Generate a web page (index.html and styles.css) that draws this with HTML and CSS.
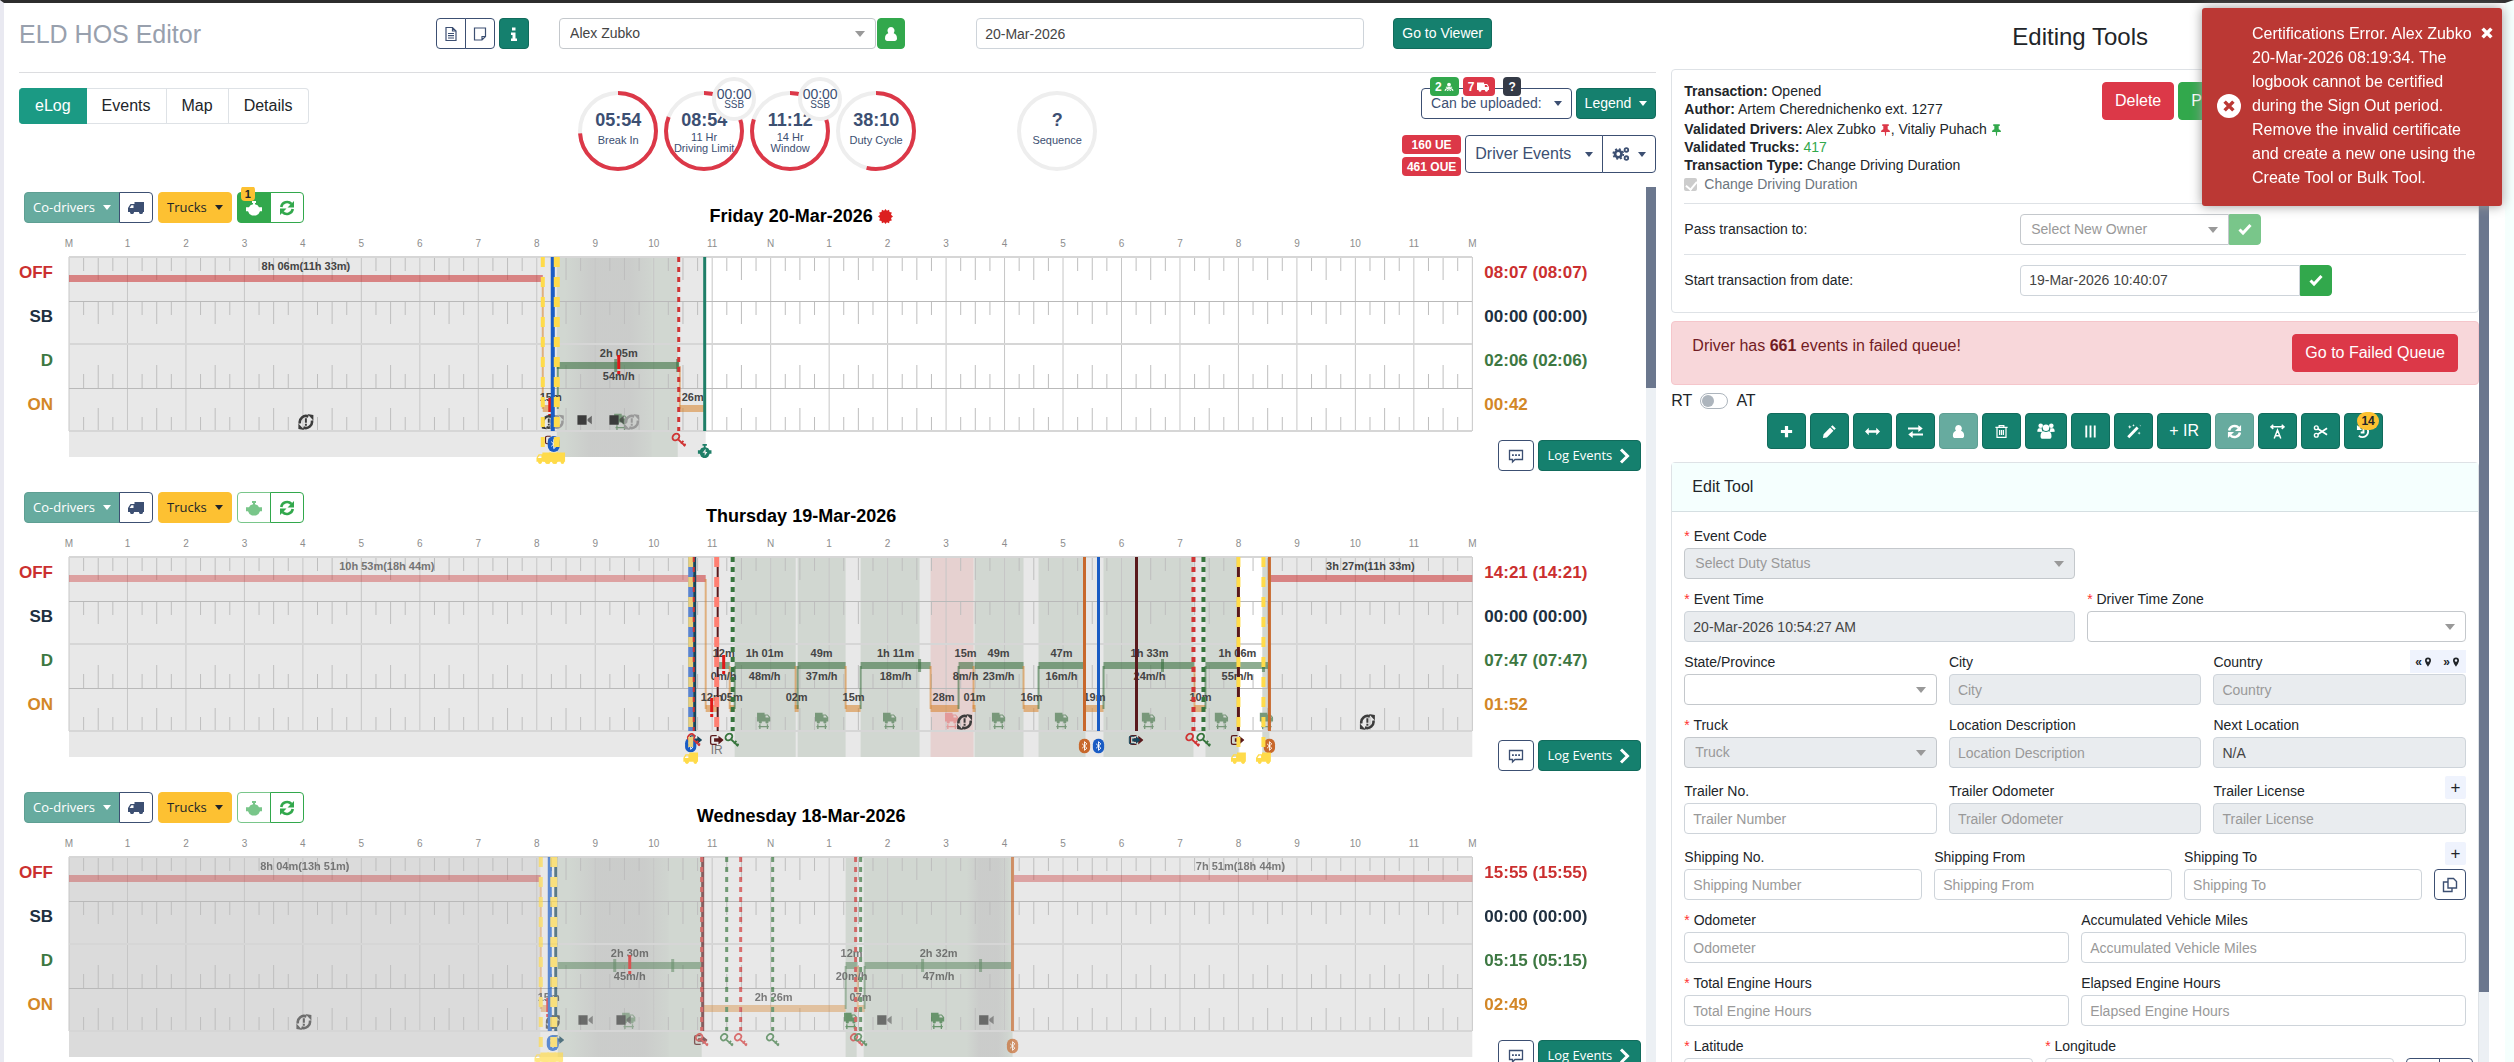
FILE: index.html
```html
<!DOCTYPE html>
<html lang="en">
<head>
<meta charset="utf-8">
<title>ELD HOS Editor</title>
<meta name="viewport" content="width=device-width, initial-scale=1">
<link rel="stylesheet" href="styles.css">
</head>
<body>
<svg class="sprite" aria-hidden="true">
  <symbol id="i-file" viewBox="0 0 16 16"><path d="M3 1.500h6.500L13 5v9.500H3zM9.500 1.500V5H13M5 7.500h6M5 9.700h6M5 12h6" fill="none" stroke="currentColor" stroke-width="1.200"/></symbol>
  <symbol id="i-note" viewBox="0 0 16 16"><path d="M2.500 2h11v8.500L10 14H2.500zM13.500 10.500H10V14" fill="none" stroke="currentColor" stroke-width="1.200"/></symbol>
  <symbol id="i-info" viewBox="0 0 16 16"><path d="M6 1.500h3.500v3H6zM5 6.500h4.500v6H11V15H5v-2.500h1.500V9H5z" fill="currentColor"/></symbol>
  <symbol id="i-user" viewBox="0 0 16 16"><path d="M8 1a3.600 3.800 0 0 1 2.700 6.300C12.800 8 14 9.500 14 12.500c0 1.500-1 2.500-2.300 2.500H4.300C3 15 2 14 2 12.500 2 9.500 3.200 8 5.300 7.300A3.600 3.800 0 0 1 8 1z" fill="currentColor"/></symbol>
  <symbol id="i-truck" viewBox="0 0 16 16"><path d="M6.500 2H16v10h-1a2 2 0 0 1-4 0H6a2 2 0 0 1-4 0H0V8l2.500-4h4zM5.500 5.200H3.400L1.600 8h3.900z" fill="currentColor" fill-rule="evenodd"/><circle cx="4" cy="12.500" r="1.600" fill="currentColor"/><circle cx="13" cy="12.500" r="1.600" fill="currentColor"/></symbol>
  <symbol id="i-truck-r" viewBox="0 0 16 16"><path d="M0 2h9.500v2h4L16 8v4h-1.500a2 2 0 0 1-4 0H6a2 2 0 0 1-4 0H0zM10.500 5.200V8h4l-1.700-2.800z" fill="currentColor" fill-rule="evenodd"/><circle cx="4" cy="12.500" r="1.500" fill="currentColor"/><circle cx="12.500" cy="12.500" r="1.500" fill="currentColor"/></symbol>
  <symbol id="i-timer" viewBox="0 0 16 16"><path d="M6 1h4v2H9v1.200l2.600 1 1.400 2H16v4h-2L12.500 14 10 15.500H6L3.500 14 2 11.200H0v-4h3l1.400-2 2.600-1V3H6z" fill="currentColor"/></symbol>
  <symbol id="i-stopwatch" viewBox="0 0 16 16"><path d="M5.500 0h5v2H9v1.600l3 1.200 1.500 2.400H16v4h-2.300L12 14.500 9.500 16h-3L4 14.500l-1.700-3.300H0v-4h2.500L4 4.800l3-1.200V2H5.500zM9 5.500L5.500 10H8v3.500L11 9H9z" fill="currentColor" fill-rule="evenodd"/></symbol>
  <symbol id="i-sync" viewBox="0 0 16 16"><path d="M2.200 7A6 6 0 0 1 12.500 4M13.800 9A6 6 0 0 1 3.500 12" fill="none" stroke="currentColor" stroke-width="2.600"/><path d="M15 1v6.500H8.500zM1 15V8.500h6.500z" fill="currentColor"/></symbol>
  <symbol id="i-sync-alert" viewBox="0 0 16 16"><path d="M2 9.500A6.200 6.200 0 0 1 10.500 2.500M14 6.500a6.200 6.200 0 0 1-8.500 7" fill="none" stroke="currentColor" stroke-width="2.600"/><path d="M9.500 0L15.500 1v5.500zM6.500 16L.5 15V9.500zM7 4.300h2v4.500H7zM7 9.800h2v1.900H7z" fill="currentColor"/></symbol>
  <symbol id="i-gears" viewBox="0 0 20 16"><circle cx="7" cy="8" r="3.600" fill="none" stroke="currentColor" stroke-width="3"/><circle cx="7" cy="8" r="5.600" fill="none" stroke="currentColor" stroke-width="1.800" stroke-dasharray="2.200 2.200"/><circle cx="16" cy="3.500" r="2" fill="none" stroke="currentColor" stroke-width="2"/><circle cx="16" cy="12.500" r="2" fill="none" stroke="currentColor" stroke-width="2"/></symbol>
  <symbol id="i-burst" viewBox="0 0 16 16"><path d="M8 0l1.500 1.800L11.800.8l.5 2.400 2.400.4-.8 2.400L16 8l-2.100 1.600.8 2.600-2.400.5-.5 2.500-2.300-1L8 16l-1.500-1.800-2.300 1-.5-2.500-2.400-.5.8-2.600L0 8l2.100-2-.8-2.400 2.400-.4.5-2.400 2.300 1z" fill="currentColor"/></symbol>
  <symbol id="i-comment" viewBox="0 0 16 16"><path d="M1.500 2.500h13v9H7L4.500 14v-2.500h-3z" fill="none" stroke="currentColor" stroke-width="1.300"/><path d="M4 6.200h1.800V8H4zM7.100 6.200h1.800V8H7.100zM10.200 6.200H12V8h-1.800z" fill="currentColor"/></symbol>
  <symbol id="i-chevron" viewBox="0 0 16 16"><path d="M5 1.500L11.500 8 5 14.500" fill="none" stroke="currentColor" stroke-width="3"/></symbol>
  <symbol id="i-check" viewBox="0 0 16 16"><path d="M2.500 8.500l3.500 3.500L13.500 4" fill="none" stroke="currentColor" stroke-width="3"/></symbol>
  <symbol id="i-pin" viewBox="0 0 16 16"><path d="M4 1h8v2h-1.300v4.200C12.500 7.800 13.500 8.800 13.500 10.500H8.900L8.500 15h-1l-.4-4.500H2.500c0-1.700 1-2.700 2.800-3.300V3H4z" fill="currentColor"/></symbol>
  <symbol id="i-plus" viewBox="0 0 16 16"><path d="M6.300 2h3.400v4.300H14v3.400H9.700V14H6.300V9.700H2V6.300h4.300z" fill="currentColor"/></symbol>
  <symbol id="i-pencil" viewBox="0 0 16 16"><path d="M11.200 1.300l3.500 3.500-1.700 1.700L9.500 3zM8.700 3.800l3.500 3.500-7 7-4.200.700.700-4.200z" fill="currentColor"/></symbol>
  <symbol id="i-arrows-h" viewBox="0 0 16 16"><path d="M0 8l4-4v2.700h8V4l4 4-4 4V9.300H4V12z" fill="currentColor"/></symbol>
  <symbol id="i-exchange" viewBox="0 0 16 16"><path d="M0 3.700h11V1l4.700 3.800L11 8.500V5.800H0zM16 10.200H5V7.500L.3 11.200 5 15v-2.700h11z" fill="currentColor"/></symbol>
  <symbol id="i-trash" viewBox="0 0 16 16"><path d="M1.500 3.700h13M5.500 3.500V1.700h5v1.800M3.200 4v10.300h9.600V4M6 6.500v5.300M8 6.500v5.300M10 6.500v5.300" fill="none" stroke="currentColor" stroke-width="1.300"/></symbol>
  <symbol id="i-users" viewBox="0 0 18 16"><circle cx="3.700" cy="2.800" r="2.300" fill="currentColor"/><circle cx="14.300" cy="2.800" r="2.300" fill="currentColor"/><circle cx="9" cy="4.800" r="3.200" fill="currentColor"/><path d="M.3 8.800c0-2.500.8-3.500 2-3.500h2.400c0 1.700.5 2.700 1.300 3.700zM17.700 8.800c0-2.500-.8-3.500-2-3.500h-2.400c0 1.700-.5 2.700-1.300 3.700zM3.500 13.500c0-3.500 1-5 3-5.300 1.500 1 3.500 1 5 0 2 .3 3 1.800 3 5.300 0 1.500-1 2.300-2 2.300H5.500c-1 0-2-.8-2-2.300z" fill="currentColor"/></symbol>
  <symbol id="i-bars" viewBox="0 0 16 16"><path d="M2.500 1.500h2v13h-2zM7 1.500h2v13H7zM11.500 1.500h2v13h-2z" fill="currentColor"/></symbol>
  <symbol id="i-wand" viewBox="0 0 16 16"><path d="M11.300 2.700l2.200 2.200L3.500 15.300 1.300 13.100zM4 1l.6 1.600L6 3l-1.400.6L4 5l-.6-1.400L2 3l1.400-.4zM8 0l.4 1 1 .4-1 .4-.4 1-.4-1-1-.4 1-.4zM14 8l.5 1.300 1.300.4-1.300.5L14 11.500l-.5-1.300-1.300-.5 1.300-.4zM14.500.5L15 2l1 .3" fill="currentColor"/></symbol>
  <symbol id="i-text" viewBox="0 0 16 16"><path d="M1 3h14M3.500.8L1 3l2.500 2.200M12.500.8L15 3l-2.500 2.200M4.500 15.500L8 6.500l3.500 9M5.800 12.500h4.400" fill="none" stroke="currentColor" stroke-width="1.600"/></symbol>
  <symbol id="i-cut" viewBox="0 0 16 16"><circle cx="3.500" cy="4" r="2" fill="none" stroke="currentColor" stroke-width="1.500"/><circle cx="3.500" cy="12" r="2" fill="none" stroke="currentColor" stroke-width="1.500"/><path d="M5.200 5L15 11.500M5.200 11L15 4.500" stroke="currentColor" stroke-width="1.900"/></symbol>
  <symbol id="i-undo" viewBox="0 0 16 16"><path d="M3 3.500A6 6 0 1 1 3 12.500M8 5v4H5" fill="none" stroke="currentColor" stroke-width="2"/><path d="M1 1v5.500h5.500z" fill="currentColor"/></symbol>
  <symbol id="i-marker" viewBox="0 0 16 16"><path d="M8 .8a4.800 4.800 0 0 1 4.800 4.800C12.800 9 8 15.500 8 15.500S3.200 9 3.200 5.600A4.800 4.800 0 0 1 8 .8zM8 3.600a2 2 0 1 0 0 4 2 2 0 0 0 0-4z" fill="currentColor" fill-rule="evenodd"/></symbol>
  <symbol id="i-copy" viewBox="0 0 16 16"><path d="M6 1.500h5.500l3 3V11H6zM6 5H1.500v9.500H10V11" fill="none" stroke="currentColor" stroke-width="1.400"/></symbol>
  <symbol id="i-times" viewBox="0 0 16 16"><path d="M3 3l10 10M13 3L3 13" stroke="currentColor" stroke-width="4"/></symbol>
  <symbol id="i-camera" viewBox="0 0 16 16"><path d="M0 3h10v10H0z" fill="currentColor"/><path d="M11 7l4.500-3.500v9L11 9z" fill="currentColor" opacity=".7"/></symbol>
  <symbol id="i-key" viewBox="0 0 16 16"><g fill="none" stroke="currentColor" stroke-width="2"><ellipse cx="5" cy="4.800" rx="4" ry="3.200" transform="rotate(-45 5 4.800)"/><path d="M7.500 7.500l7.500 7M10.500 12l2.500-3M13.300 14.500l2-2.500"/></g></symbol>
  <symbol id="i-bt" viewBox="0 0 12 16"><rect width="12" height="16" rx="6" fill="currentColor"/><path d="M3.500 5.700l5 4.600L6 12.600V3.400l2.500 2.300-5 4.600" fill="none" stroke="#fff" stroke-width="1"/></symbol>
  <symbol id="i-exit" viewBox="0 0 16 16"><path d="M8 3H3a2 2 0 0 0-2 2v6a2 2 0 0 0 2 2h5" fill="none" stroke="currentColor" stroke-width="1.600"/><path d="M5 6h5V3l6 5-6 5v-3H5z" fill="currentColor"/></symbol>
  <symbol id="i-haul" viewBox="0 0 14 18"><path d="M0 0h8v2h3.500L14 5v4.500H0zM9 3.200V5.300h3.600l-1.600-2.100z" fill="currentColor" fill-rule="evenodd"/><circle cx="3.500" cy="10" r="1.700" fill="currentColor"/><circle cx="10.500" cy="10" r="1.700" fill="currentColor"/><path d="M1.500 15h11M3 12.500v5M11 12.500v5" fill="none" stroke="currentColor" stroke-width="1.400"/></symbol>
  <symbol id="i-signal" viewBox="0 0 16 16"><circle cx="8" cy="4" r="3" fill="currentColor"/><path d="M3 8.500h10M1.500 14c1-3 3-4 6.500-4s5.500 1 6.500 4M5 14c.5-1 1.500-1.500 3-1.500s2.500.5 3 1.500" fill="none" stroke="currentColor" stroke-width="1.700"/></symbol>
</svg>

<main class="app">
  <section class="log" aria-label="Log">
    <header class="log-header">
      <h1 class="app-title">ELD HOS Editor</h1>
      <div class="doc-tools">
        <div class="btn-group">
          <button class="btn sm outline" aria-label="Document"><svg class="ic"><use href="#i-file"/></svg></button>
          <button class="btn sm outline" aria-label="Note"><svg class="ic"><use href="#i-note"/></svg></button>
        </div>
        <button class="btn sm teal" aria-label="Info"><svg class="ic"><use href="#i-info"/></svg></button>
      </div>
      <div class="driver-pick">
        <span class="select"><select aria-label="Driver"><option>Alex Zubko</option></select></span>
        <button class="btn sm green" aria-label="Driver profile"><svg class="ic"><use href="#i-user"/></svg></button>
      </div>
      <div class="date-pick"><input class="field" aria-label="Log date" value="20-Mar-2026"></div>
      <div><button class="btn sm teal">Go to Viewer</button></div>
    </header>

    <div class="log-bar">
      <nav class="tabs">
        <a class="tab active" href="#elog">eLog</a><a class="tab" href="#events">Events</a><a class="tab" href="#map">Map</a><a class="tab" href="#details">Details</a>
      </nav>
      <div class="dials">
        <div class="dial"><svg viewBox="0 0 80 80"><circle class="track" cx="40" cy="40" r="38"/><circle class="arc" cx="40" cy="40" r="38" pathLength="100" stroke-dasharray="74 100"/></svg><b>05:54</b><span>Break In</span></div>
        <div class="dial two"><svg viewBox="0 0 80 80"><circle class="track" cx="40" cy="40" r="38"/><circle class="arc" cx="40" cy="40" r="38" pathLength="100" stroke-dasharray="81 100"/></svg><b>08:54</b><span>11 Hr<br>Driving Limit</span><div class="ssb">00:00<small>SSB</small></div></div>
        <div class="dial two"><svg viewBox="0 0 80 80"><circle class="track" cx="40" cy="40" r="38"/><circle class="arc" cx="40" cy="40" r="38" pathLength="100" stroke-dasharray="80 100"/></svg><b>11:12</b><span>14 Hr<br>Window</span><div class="ssb">00:00<small>SSB</small></div></div>
        <div class="dial"><svg viewBox="0 0 80 80"><circle class="track" cx="40" cy="40" r="38"/><circle class="arc" cx="40" cy="40" r="38" pathLength="100" stroke-dasharray="54 100"/></svg><b>38:10</b><span>Duty Cycle</span></div>
        <div class="dial apart"><svg viewBox="0 0 80 80"><circle class="track" cx="40" cy="40" r="38"/></svg><b>?</b><span>Sequence</span></div>
      </div>
      <div class="log-actions">
        <div class="action-row">
          <div class="upload">
            <button class="btn sm outline caret">Can be uploaded:</button>
            <div class="upload-badges"><span class="badge green">2<svg class="ic xs"><use href="#i-signal"/></svg></span><span class="badge red">7<svg class="ic wide-xs"><use href="#i-truck-r"/></svg></span><span class="badge dark">?</span></div>
          </div>
          <button class="btn sm teal caret">Legend</button>
        </div>
        <div class="action-row">
          <div class="counts"><span class="badge red">160 UE</span><span class="badge red">461 OUE</span></div>
          <div class="btn-group">
            <button class="btn outline caret wide">Driver Events</button>
            <button class="btn outline caret" aria-label="Settings"><svg class="ic gears"><use href="#i-gears"/></svg></button>
          </div>
        </div>
      </div>
    </div>

    <div class="scroller">
      <div class="days" id="days"></div>
      <div class="bar"><div class="thumb"></div></div>
    </div>
  </section>

  <section class="tools" aria-label="Editing Tools">
    <h2 class="tools-title">Editing Tools</h2>
    <div class="scroller">
      <div class="panel">
        <div class="card tx">
          <div class="tx-head">
            <div class="tx-info">
              <p><b>Transaction:</b> Opened</p>
              <p><b>Author:</b> Artem Cherednichenko ext. 1277</p>
              <p class="pins"><b>Validated Drivers:</b> Alex Zubko <svg class="ic pin red-t"><use href="#i-pin"/></svg>, Vitaliy Puhach <svg class="ic pin green-t"><use href="#i-pin"/></svg></p>
              <p><b>Validated Trucks:</b> <span class="green-t">417</span></p>
              <p><b>Transaction Type:</b> Change Driving Duration</p>
              <label class="tick"><input type="checkbox" checked disabled>Change Driving Duration</label>
            </div>
            <div class="tx-actions">
              <button class="btn red">Delete</button>
              <button class="btn green">Process Transaction</button>
            </div>
          </div>
          <div class="tx-row">
            <label for="owner">Pass transaction to:</label>
            <div class="attach owner"><span class="select muted"><select id="owner"><option>Select New Owner</option></select></span><button class="btn sm green faded" aria-label="Pass"><svg class="ic"><use href="#i-check"/></svg></button></div>
          </div>
          <div class="tx-row">
            <label for="start">Start transaction from date:</label>
            <div class="attach start"><input class="field" id="start" value="19-Mar-2026 10:40:07"><button class="btn sm green" aria-label="Set date"><svg class="ic"><use href="#i-check"/></svg></button></div>
          </div>
        </div>

        <div class="alert">
          <p>Driver has <b>661</b> events in failed queue!</p>
          <button class="btn red">Go to Failed Queue</button>
        </div>

        <label class="switch">RT <input type="checkbox"> AT</label>

        <div class="toolbar">
          <button class="btn teal" aria-label="Add"><svg class="ic"><use href="#i-plus"/></svg></button>
          <button class="btn teal" aria-label="Edit"><svg class="ic"><use href="#i-pencil"/></svg></button>
          <button class="btn teal" aria-label="Resize"><svg class="ic"><use href="#i-arrows-h"/></svg></button>
          <button class="btn teal" aria-label="Swap"><svg class="ic"><use href="#i-exchange"/></svg></button>
          <button class="btn teal faded" aria-label="Driver"><svg class="ic"><use href="#i-user"/></svg></button>
          <button class="btn teal" aria-label="Delete"><svg class="ic"><use href="#i-trash"/></svg></button>
          <button class="btn teal" aria-label="Team"><svg class="ic team"><use href="#i-users"/></svg></button>
          <button class="btn teal" aria-label="Columns"><svg class="ic"><use href="#i-bars"/></svg></button>
          <button class="btn teal" aria-label="Magic"><svg class="ic"><use href="#i-wand"/></svg></button>
          <button class="btn teal">+ IR</button>
          <button class="btn teal faded" aria-label="Refresh"><svg class="ic"><use href="#i-sync"/></svg></button>
          <button class="btn teal" aria-label="Text width"><svg class="ic"><use href="#i-text"/></svg></button>
          <button class="btn teal" aria-label="Cut"><svg class="ic"><use href="#i-cut"/></svg></button>
          <button class="btn teal history" aria-label="History"><svg class="ic"><use href="#i-undo"/></svg><span class="count">14</span></button>
        </div>

        <div class="card edit">
          <h3 class="edit-title">Edit Tool</h3>
          <form class="form">
            <div class="row r-half">
              <div><div class="lab"><label class="req" for="code">Event Code</label></div><span class="select muted off"><select id="code" disabled><option>Select Duty Status</option></select></span></div>
            </div>
            <div class="row r-half">
              <div><div class="lab"><label class="req" for="time">Event Time</label></div><input class="field" id="time" value="20-Mar-2026 10:54:27 AM" disabled></div>
              <div><div class="lab"><label class="req" for="tz">Driver Time Zone</label></div><span class="select"><select id="tz"><option></option></select></span></div>
            </div>
            <div class="row r3">
              <div><div class="lab"><label for="state">State/Province</label></div><span class="select"><select id="state"><option></option></select></span></div>
              <div><div class="lab"><label for="city">City</label></div><input class="field" id="city" placeholder="City" disabled></div>
              <div><div class="lab"><label for="country">Country</label><span class="chips"><button type="button" class="chip" aria-label="Previous location">«<svg class="ic xs"><use href="#i-marker"/></svg></button><button type="button" class="chip" aria-label="Next location">»<svg class="ic xs"><use href="#i-marker"/></svg></button></span></div><input class="field" id="country" placeholder="Country" disabled></div>
            </div>
            <div class="row r3">
              <div><div class="lab"><label class="req" for="truck">Truck</label></div><span class="select muted off"><select id="truck" disabled><option>Truck</option></select></span></div>
              <div><div class="lab"><label for="desc">Location Description</label></div><input class="field" id="desc" placeholder="Location Description" disabled></div>
              <div><div class="lab"><label for="next">Next Location</label></div><input class="field" id="next" value="N/A" disabled></div>
            </div>
            <div class="row r3 tall">
              <div><div class="lab"><label for="trno">Trailer No.</label></div><input class="field" id="trno" placeholder="Trailer Number"></div>
              <div><div class="lab"><label for="trod">Trailer Odometer</label></div><input class="field" id="trod" placeholder="Trailer Odometer" disabled></div>
              <div><div class="lab"><label for="trli">Trailer License</label><span class="chips"><button type="button" class="chip add" aria-label="Add trailer">+</button></span></div><input class="field" id="trli" placeholder="Trailer License" disabled></div>
            </div>
            <div class="row r-ship tall">
              <div><div class="lab"><label for="shno">Shipping No.</label></div><input class="field" id="shno" placeholder="Shipping Number"></div>
              <div><div class="lab"><label for="shfr">Shipping From</label></div><input class="field" id="shfr" placeholder="Shipping From"></div>
              <div><div class="lab"><label for="shto">Shipping To</label></div><input class="field" id="shto" placeholder="Shipping To"></div>
              <div><div class="lab"><span class="chips"><button type="button" class="chip add" aria-label="Add shipping">+</button></span></div><button type="button" class="btn sm outline copy" aria-label="Copy"><svg class="ic"><use href="#i-copy"/></svg></button></div>
            </div>
            <div class="row r2">
              <div><div class="lab"><label class="req" for="odo">Odometer</label></div><input class="field" id="odo" placeholder="Odometer"></div>
              <div><div class="lab"><label for="avm">Accumulated Vehicle Miles</label></div><input class="field" id="avm" placeholder="Accumulated Vehicle Miles"></div>
            </div>
            <div class="row r2">
              <div><div class="lab"><label class="req" for="teh">Total Engine Hours</label></div><input class="field" id="teh" placeholder="Total Engine Hours"></div>
              <div><div class="lab"><label for="eeh">Elapsed Engine Hours</label></div><input class="field" id="eeh" placeholder="Elapsed Engine Hours"></div>
            </div>
            <div class="row r-geo">
              <div><div class="lab"><label class="req" for="lat">Latitude</label></div><input class="field" id="lat"></div>
              <div><div class="lab"><label class="req" for="lon">Longitude</label></div><input class="field" id="lon"></div>
              <div><div class="lab"></div><div class="btn-group"><button type="button" class="btn sm outline" aria-label="Pick on map"><svg class="ic"><use href="#i-marker"/></svg></button><button type="button" class="btn sm outline" aria-label="Copy"><svg class="ic"><use href="#i-copy"/></svg></button></div></div>
            </div>
          </form>
        </div>
      </div>
      <div class="bar"><div class="thumb long"></div></div>
    </div>
  </section>
</main>

<div class="toast" role="alert">
  <span class="toast-icon"><svg class="ic"><use href="#i-times"/></svg></span>
  <p>Certifications Error. Alex Zubko 20-Mar-2026 08:19:34. The logbook cannot be certified during the Sign Out period. Remove the invalid certificate and create a new one using the Create Tool or Bulk Tool.</p>
  <button class="toast-close" aria-label="Close"><svg class="ic xs"><use href="#i-times"/></svg></button>
</div>
<script src="chart.js"></script>
</body>
</html>
```
FILE: styles.css
```css
* { box-sizing: border-box; }
body {
  margin: 0;
  height: 100vh;
  overflow: hidden;
  font-family: "Liberation Sans", Arial, sans-serif;
  font-size: 16px;
  line-height: 24px;
  color: #212529;
  background: #fff;
  border-top: 3px solid #2d2d2d;
  border-left: 4px solid #e9e9f1;
  border-right: 9px solid #f5fffd;
}
h1, h2, h3, p { margin: 0; font-weight: 400; }
button, input, select { font: inherit; color: inherit; }
.sprite { display: none; }
.ic { width: 16px; height: 16px; flex: none; display: block; }
.ic.xs { width: 10px; height: 10px; }
.ic.wide-xs { width: 14px; height: 12px; }

.app { display: grid; grid-template-columns: minmax(0, 2fr) minmax(0, 1fr); height: 100%; }
.log { display: flex; flex-direction: column; min-height: 0; padding: 0 15px; }
.tools { display: flex; flex-direction: column; min-height: 0; padding-right: 16px; }

/* buttons */
.btn {
  display: inline-flex; align-items: center; justify-content: center;
  height: 38px; padding: 0 12px;
  border: 1px solid transparent; border-radius: 4px;
  font-size: 16px; line-height: 24px; white-space: nowrap; background: #fff;
}
.btn.sm { height: 31px; padding: 0 8px; font-size: 14px; line-height: 21px; }
.btn.teal { background: #15806e; border-color: #116b5c; color: #fff; }
.btn.green { background: #32a84c; border-color: #32a84c; color: #fff; }
.btn.red { background: #dc3848; border-color: #dc3848; color: #fff; }
.btn.amber { background: #fdc132; border-color: #fdc132; color: #212529; }
.btn.outline { border-color: #3c4f72; color: #3c4f72; }
.btn.outline-green { border-color: #32a84c; color: #32a84c; }
.btn.faded { opacity: .65; }
.btn.caret::after {
  content: ""; margin-left: 8px;
  border: 4px solid transparent; border-top: 5px solid currentColor; border-bottom: 0;
}
.btn-group { display: flex; }
.btn-group .btn + .btn { margin-left: -1px; border-top-left-radius: 0; border-bottom-left-radius: 0; }
.btn-group .btn:not(:last-child) { border-top-right-radius: 0; border-bottom-right-radius: 0; }
.badge {
  display: inline-flex; align-items: center; gap: 2px; justify-content: center;
  height: 19px; padding: 0 5px; border-radius: 4px;
  font-size: 12px; line-height: 12px; font-weight: 700; color: #fff;
}
.badge.green { background: #32a84c; }
.badge.red { background: #dc3848; }
.badge.dark { background: #343a46; }

/* fields */
.field, .select select {
  width: 100%; height: 31px; padding: 0 8px;
  border: 1px solid #ced4da; border-radius: 4px; background: #fff;
  font-size: 14px; line-height: 21px; color: #444; opacity: 1; display: block;
}
.field::placeholder { color: #999; opacity: 1; }
.field:disabled { background: #e9ecef; }
.select { position: relative; display: block; width: 100%; }
.select select { appearance: none; padding: 0 10px; border-color: #c4c8cc; }
.select.muted select { color: #999; }
.select.off select { background: #e9ecef; }
.select::after {
  content: ""; position: absolute; right: 11px; top: 13px;
  border: 5px solid transparent; border-top: 6px solid #999; border-bottom: 0;
}

/* log header */
.log-header {
  display: grid; grid-template-columns: 417fr 123fr 417fr 417fr 263fr;
  align-items: start; padding: 15px 0 22px; border-bottom: 1px solid #dcdde0;
}
.app-title { font-size: 25px; line-height: 32px; color: #98a0ad; }
.doc-tools { display: flex; gap: 4px; }
.doc-tools .btn { width: 30px; padding: 0; }
.driver-pick { display: flex; gap: 1px; width: 83%; }
.driver-pick .btn { width: 28px; padding: 0; flex: none; }
.date-pick { width: 93%; }

.log-bar { display: grid; grid-template-columns: 1fr auto 1fr; align-items: start; padding-top: 15px; height: 114px; flex: none; }
.tabs { display: flex; }
.tab {
  padding: 5px 15px; height: 36px; border: 1px solid #dee2e6; border-left: 0;
  color: #212529; text-decoration: none;
}
.tab:last-child { border-radius: 0 4px 4px 0; }
.tab.active { background: #1b9a84; border-color: #1b9a84; color: #fff; border-radius: 4px 0 0 4px; padding-left: 16px; }

.dials { display: flex; gap: 6px; padding-top: 3px; }
.dial {
  position: relative; width: 80px; height: 80px; padding-top: 17px;
  display: flex; flex-direction: column; align-items: center; text-align: center;
  color: #3c4f72; font-size: 11px; line-height: 16px;
}
.dial > svg { position: absolute; inset: 0; transform: rotate(-90deg); }
.dial circle { fill: none; stroke-width: 4; }
.dial .track { stroke: #eee; }
.dial .arc { stroke: #dc3848; }
.dial b { font-size: 18px; line-height: 24px; }
.dial.two span { line-height: 11px; white-space: nowrap; }
.dial.apart { margin-left: 95px; }
.ssb {
  position: absolute; left: 48px; top: -14px; width: 44px; height: 44px; z-index: 1;
  border: 4px solid #eee; border-radius: 50%; background: #fff;
  display: flex; flex-direction: column; align-items: center; justify-content: center;
  font-size: 14px; line-height: 12px;
}
.ssb small { font-size: 10px; line-height: 10px; }

.log-actions { display: flex; flex-direction: column; gap: 16px; align-items: flex-end; }
.action-row { display: flex; gap: 4px; }
.upload { position: relative; }
.upload .btn { padding: 0 9px; }
.upload .caret::after { margin-left: 12px; }
.upload-badges { position: absolute; left: 9px; top: -11px; display: flex; gap: 4px; }
.upload-badges .dark { margin-left: 4px; }
.counts { display: flex; flex-direction: column; gap: 3px; }
.action-row .wide { padding: 0 9px; }
.action-row .wide::after { margin-left: 14px; }
.gears { width: 18px; }
.action-row .btn-group .btn:last-child { padding: 0 9px; }

/* scroll areas */
.scroller { display: flex; flex: 1; min-height: 0; }
.days, .panel { flex: 1; min-width: 0; overflow: hidden; }
.bar { width: 10px; background: #ecf0f4; }
.thumb { height: 23%; background: #6b778e; }
.thumb.long { height: 93%; }

/* day */
.day { padding: 5px 0 16px; }
.day-head { display: grid; grid-template-columns: 1fr auto 1fr; padding: 0 68px 0 5px; height: 41px; }
.day-tools { display: flex; gap: 5px; align-items: flex-start; }
.day-tools .btn, .log-events { font-family: "Open Sans", "Noto Sans", sans-serif; }
.day-tools .btn.sm, .day-foot .btn.sm { font-size: 13px; padding: 0 8px; }
.day-tools .faded.teal { background: #67ab9f; border-color: #5e9f93; opacity: 1; }
.timer { position: relative; }
.timer .one { position: absolute; left: 3px; top: -7px; height: 15px; padding: 0 4px; background: #fdc132; color: #212529; font-family: "Liberation Sans", Arial, sans-serif; font-size: 11px; }
.day-title {
  display: flex; align-items: center; gap: 5px; padding-top: 12px; height: 36px;
  font-weight: 700; font-size: 18px; line-height: 24px; color: #000;
}
.day-title .ic { width: 15px; height: 15px; color: #dc1f1f; }
.day-body { display: grid; grid-template-columns: 50px minmax(0, 1fr) 174px; height: 238px; }
.duty, .totals { display: grid; grid-template-rows: repeat(4, 44px) auto; padding-top: 26px; align-items: start; font-size: 17px; line-height: 28px; font-weight: 700; }
.duty { justify-items: end; padding-right: 16px; }
.totals { padding-left: 12px; }
.off-c { color: #cb2f2f; } .sb-c { color: #203040; } .d-c { color: #3d7842; } .on-c { color: #d38727; }
.day-foot { display: flex; gap: 4px; justify-content: flex-end; padding: 5px 5px 0 0; font-weight: 400; }
.day-foot .note { width: 36px; }
.day-foot .log-events { gap: 4px; }
.chart { width: 100%; height: 238px; overflow: visible; display: block; }
.hour { font-size: 10px; fill: #8d8d8d; text-anchor: middle; }
.dur { font-size: 11px; font-weight: 700; fill: #444; text-anchor: middle; }
.ir-t { font-size: 12px; fill: #777; text-anchor: middle; }

/* tools */
.tools-title { height: 66px; padding-top: 20px; text-align: center; font-size: 24px; line-height: 28px; }
.card { border: 1px solid #dee2e6; border-radius: 4px; padding: 12px; }
.card.tx { padding-bottom: 7px; }
.tx-head { display: flex; justify-content: space-between; padding-bottom: 10px; }
.tx-info { font-size: 14px; line-height: 18px; }
.tx-info .pins { padding-top: 2px; }
.pin { display: inline-block; vertical-align: -3px; width: 13px; height: 14px; margin: 0 -1px; }
.green-t { color: #32a84c; } .red-t { color: #dc3848; }
.tick { display: flex; align-items: center; gap: 7px; padding-top: 1px; color: #6c757d; }
.tick input { appearance: none; width: 13px; height: 13px; margin: 0; border-radius: 2px; background: #ccc; }
.tick input::before {
  content: ""; display: block; width: 5px; height: 9px; margin: 1px 0 0 4px;
  border: solid #fff; border-width: 0 2px 2px 0; transform: rotate(40deg);
}
.tx-actions { display: flex; gap: 4px; width: 364px; }
.tx-row {
  display: grid; grid-template-columns: 336fr 446fr; align-items: center;
  height: 51px; border-top: 1px solid #dee2e6; font-size: 14px;
}
.attach { display: flex; }
.attach .btn { width: 32px; flex: none; border-radius: 0 4px 4px 0; }
.attach .field, .attach select { border-radius: 4px 0 0 4px; }
.attach.owner { width: 54%; }
.attach.start { width: 70%; }

.alert {
  display: flex; justify-content: space-between; align-items: flex-start;
  margin-top: 8px; padding: 12px 20px; height: 64px;
  border: 1px solid #f5c6cb; border-radius: 4px; background: #f8d7da; color: #721c24;
}
.switch { display: flex; align-items: center; gap: 8px; height: 28px; padding-top: 3px; }
.switch input {
  appearance: none; width: 28px; height: 16px; margin: 0; padding: 1px;
  border: 1px solid #adb5bd; border-radius: 8px; background: #fff;
}
.switch input::before { content: ""; display: block; width: 12px; height: 12px; border-radius: 50%; background: #adb5bd; }
.toolbar { display: flex; gap: 4px; justify-content: center; }
.toolbar .btn { height: 36px; padding: 0 11px; font-size: 16px; }
.toolbar .ic { width: 15px; height: 15px; }
.toolbar .team { width: 18px; height: 16px; }
.toolbar .btn.faded { background: #67ab9f; border-color: #5e9f93; opacity: 1; }
.history { position: relative; }
.count {
  position: absolute; right: 3px; top: -2px; width: 22px; height: 18px; border-radius: 9px;
  background: #fdc132; color: #212529; font-size: 12px; line-height: 18px; font-weight: 700; text-align: center;
}

.edit { margin-top: 13px; padding: 0; }
.edit-title { height: 49px; padding: 12px 20px; border-bottom: 1px solid #d5dfe2; background: #f5fffe; font-size: 16px; line-height: 24px; }
.form { display: grid; gap: 8px; padding: 12px; font-size: 14px; }
.row { display: grid; gap: 12px; }
.row > div { min-width: 0; }
.r-half { grid-template-columns: 391fr 379fr; }
.r3 { grid-template-columns: repeat(3, 1fr); }
.r2 { grid-template-columns: repeat(2, 1fr); }
.r-ship { grid-template-columns: repeat(3, 1fr) 32px; }
.r-geo { grid-template-columns: repeat(2, 1fr) 60px; }
.lab { display: flex; justify-content: space-between; align-items: flex-end; height: 24px; line-height: 24px; }
.tall .lab { height: 27px; }
.req::before { content: "* "; color: #f33; }
.chips { display: flex; margin-left: auto; padding-bottom: 1px; }
.tall .chips { padding-bottom: 4px; }
.chip {
  display: flex; align-items: center; justify-content: center; gap: 1px;
  width: 28px; height: 23px; padding: 0; border: 0; background: #eff3fd;
  font-size: 12px; line-height: 20px; font-weight: 700;
}
.chip.add { width: 21px; font-size: 17px; font-weight: 400; border-radius: 2px; }
.copy { width: 32px; }

/* toast */
.toast {
  position: fixed; right: 12px; top: 8px; width: 300px; z-index: 5;
  display: flex; align-items: center; gap: 11px; padding: 14px 6px 16px 15px;
  border-radius: 3px; background: #bb3834; color: #fff; box-shadow: 0 0 12px #999;
}
.toast p { width: 226px; flex: none; }
.toast-icon {
  width: 24px; height: 24px; flex: none; border-radius: 50%; background: #fff; color: #bb3834;
  display: flex; align-items: center; justify-content: center;
}
.toast-icon .ic { width: 14px; height: 14px; }
.toast-close { position: absolute; right: 8px; top: 18px; padding: 0; border: 0; background: none; color: #fff; }
.toast-close .ic { width: 14px; height: 14px; }
```
FILE: chart.js
```js
// Chart coordinates are in units of 1/1404 of the day's width; y is in pixels from the grid top.
const W = 1404, TOP = 24, H = 174;
const ROW_Y = [0, 44, 87, 131, 174];
const LINE_Y = { off: 22, d: 109, on: 152 };
const TEXT_Y = { off: 13, d: 100, v: 123, on: 144 };
const C = {
  off: 'rgba(200,30,30,.5)', d: 'rgba(50,105,55,.55)', on: 'rgba(215,130,40,.55)',
  yellow: '#ffdb4a', blue: '#1a5cc4', red: '#d03434', green: '#37753d', teal: '#1f7f68',
  orange: '#c8682c', maroon: '#5a1a1c', salmon: '#ff7f72', dark: '#3c3c3c', grey: '#999',
  haul: '#78987a', navy: '#17445a', mark: '#e01818', pink: '#e39a9a'
};

const days = [
  {
    title: 'Friday 20-Mar-2026', burst: true, badge: '1',
    totals: ['08:07 (08:07)', '00:00 (00:00)', '02:06 (02:06)', '00:42'],
    bands: [[0, 637, '#e8e8e8'], [488, 609, '#d1d7d1'], [496, 583, 'url(#shade)']],
    lines: [['off', 0, 474], ['on', 474, 484], ['d', 488, 610], ['on', 611, 636]],
    steps: [[474, 22, 152, 'on'], [489, 109, 152, 'd'], [611, 109, 152, 'on']],
    ticks: [547, 609],
    rods: [[484, 'blue', 4], [487, 'navy', 2, 10], [474, 'yellow', 4, 10, 190], [488, 'yellow', 6, 10, 190], [610, 'red', 3, 5], [636, 'teal', 3]],
    texts: [['off', 237, '8h 06m(11h 33m)'], ['d', 550, '2h 05m'], ['v', 550, '54m/h'], ['on', 482, '15m'], ['on', 624, '26m']],
    marks: [[550, 'd'], [481, 'on']],
    icons: [['sync-alert', 237, 165, 16, 'dark'], ['sync-alert', 480, 165, 15, 'dark'], ['sync-alert', 488, 165, 15, 'grey'], ['haul', 552, 165, 17, 'haul'], ['camera', 516, 163, 15, 'dark'], ['camera', 548, 163, 15, 'dark'], ['sync-alert', 563, 165, 16, 'grey'],
      ['key', 610, 183, 15, 'red'], ['stopwatch', 636, 194, 14, 'teal'], ['exit', 482, 183, 12, 'maroon'], ['bt', 485, 187, 16, 'blue'], ['truck', 475, 201, 15, 'yellow'], ['truck', 482, 201, 15, 'yellow'], ['truck', 489, 201, 15, 'yellow']]
  },
  {
    title: 'Thursday 19-Mar-2026',
    totals: ['14:21 (14:21)', '00:00 (00:00)', '07:47 (07:47)', '01:52'],
    bands: [[0, 1171, '#e8e8e8'], [1194, 1404, '#e8e8e8'], [666, 727, '#d1d7d1'], [729, 777, '#d1d7d1'], [792, 851, '#d1d7d1'], [862, 905, '#e6d1d0'], [906, 955, '#d1d7d1'], [970, 1017, '#d1d7d1'], [1035, 1125, '#d1d7d1'], [1137, 1170, '#d1d7d1'], [1194, 1201, '#d1d7d1']],
    lines: [['off', 0, 622, .7], ['off', 622, 637], ['off', 1202, 1404], ['d', 649, 661], ['d', 666, 727], ['d', 729, 777], ['d', 792, 862], ['d', 890, 905], ['d', 906, 955], ['d', 970, 1017], ['d', 1035, 1126], ['d', 1137, 1200],
      ['on', 637, 649], ['on', 661, 666], ['on', 726, 730], ['on', 777, 792], ['on', 862, 890], ['on', 904, 907], ['on', 955, 970], ['on', 1017, 1035], ['on', 1126, 1137]],
    steps: [[637, 22, 152, 'on'], [661, 109, 152, 'on'], [666, 109, 152, 'd'], [727, 109, 152, 'on'], [729, 109, 152, 'd'], [777, 109, 152, 'on'], [792, 109, 152, 'd'], [862, 109, 152, 'on'], [890, 109, 152, 'd'], [905, 109, 152, 'on'], [955, 109, 152, 'on'], [970, 109, 152, 'd'], [1035, 109, 152, 'd'], [1126, 109, 152, 'on'], [1137, 109, 152, 'd']],
    ticks: [851, 1094, 1195],
    rods: [[622, '#5a84cf', 5], [622, '#e8d07a', 5, 10, 190], [626, 'navy', 3], [625, 'red', 2, 5], [649, 'maroon', 2], [648, 'salmon', 5, 10], [664, 'green', 4, 5], [1016, 'orange', 3], [1030, 'blue', 3], [1068, 'maroon', 3], [1125, 'red', 4, 5], [1135, 'green', 4, 5], [1170, 'maroon', 3], [1170, 'yellow', 4, 10, 190], [1195, 'yellow', 4, 10, 190], [1201, 'orange', 3]],
    texts: [['off', 318, '10h 53m(18h 44m)', 1], ['off', 1302, '3h 27m(11h 33m)'],
      ['d', 655, '12m'], ['d', 696, '1h 01m'], ['d', 753, '49m'], ['d', 827, '1h 11m'], ['d', 897, '15m'], ['d', 930, '49m'], ['d', 993, '47m'], ['d', 1081, '1h 33m'], ['d', 1169, '1h 06m'],
      ['v', 655, '0m/h'], ['v', 696, '48m/h'], ['v', 753, '37m/h'], ['v', 827, '18m/h'], ['v', 897, '8m/h'], ['v', 930, '23m/h'], ['v', 993, '16m/h'], ['v', 1081, '24m/h'], ['v', 1169, '55m/h'],
      ['on', 643, '12m'], ['on', 663, '05m'], ['on', 728, '02m'], ['on', 785, '15m'], ['on', 875, '28m'], ['on', 906, '01m'], ['on', 963, '16m'], ['on', 1026, '19m'], ['on', 1132, '10m']],
    marks: [[655, 'd'], [643, 'on']],
    icons: [['haul', 695, 164, 17, 'haul'], ['haul', 753, 164, 17, 'haul'], ['haul', 821, 164, 17, 'haul'], ['haul', 883, 164, 17, 'pink'], ['haul', 930, 164, 17, 'haul'], ['haul', 993, 164, 17, 'haul'], ['haul', 1080, 164, 17, 'haul'], ['haul', 1153, 164, 17, 'haul'], ['haul', 1198, 164, 17, 'haul'], ['sync-alert', 896, 165, 16, 'dark'], ['sync-alert', 1299, 165, 16, 'dark'],
      ['exit', 627, 183, 13, 'navy'], ['bt', 622, 188, 15, 'blue'], ['key', 625, 183, 14, 'red'], ['exit', 648, 183, 14, 'maroon'], ['key', 663, 183, 15, 'green'], ['bt', 1016, 189, 15, 'orange'], ['bt', 1030, 189, 15, 'blue'], ['exit', 1068, 183, 14, 'maroon'], ['exit', 1066, 183, 12, 'navy'], ['key', 1124, 183, 15, 'red'], ['key', 1135, 183, 15, 'green'], ['exit', 1169, 183, 14, 'maroon'], ['bt', 1201, 189, 15, 'orange'], ['truck', 622, 201, 15, 'yellow'], ['truck', 1170, 201, 15, 'yellow'], ['truck', 1195, 201, 15, 'yellow']],
    ir: 648
  },
  {
    title: 'Wednesday 18-Mar-2026', dim: true,
    totals: ['15:55 (15:55)', '00:00 (00:00)', '05:15 (05:15)', '02:49'],
    bands: [[0, 472, '#dbdbdb'], [472, 1404, '#e8e8e8'], [489, 633, '#d1d7d1'], [500, 600, 'url(#shade)'], [777, 788, '#d1d7d1'], [795, 944, '#d1d7d1'], [898, 940, 'url(#shade)']],
    lines: [['off', 0, 472], ['off', 944, 1404], ['on', 472, 480], ['d', 489, 633], ['on', 634, 777], ['d', 777, 789], ['on', 789, 796], ['d', 796, 944]],
    steps: [[472, 22, 152, 'on'], [777, 109, 152, 'd'], [789, 109, 152, 'on'], [796, 109, 152, 'd']],
    ticks: [546, 604, 854, 912],
    rods: [[481, 'blue', 4], [487, 'navy', 3], [472, 'yellow', 4, 10, 190], [485, 'yellow', 7, 10, 190], [634, 'maroon', 3], [633, 'red', 3, 5], [658, 'green', 3, 5], [672, 'red', 3, 5], [704, 'green', 3, 5], [787, 'red', 3, 5], [792, 'green', 3, 5], [944, 'orange', 3]],
    texts: [['off', 236, '8h 04m(13h 51m)'], ['off', 1172, '7h 51m(18h 44m)'], ['d', 561, '2h 30m'], ['v', 561, '45m/h'], ['on', 480, '15m'], ['on', 705, '2h 26m'], ['d', 783, '12m'], ['v', 783, '20m/h'], ['on', 792, '07m'], ['d', 870, '2h 32m'], ['v', 870, '47m/h']],
    marks: [[561, 'd'], [479, 'on']],
    icons: [['sync-alert', 235, 165, 16, 'dark'], ['sync-alert', 484, 165, 15, 'dark'], ['camera', 517, 163, 15, 'dark'], ['haul', 560, 164, 17, 'haul'], ['camera', 555, 163, 15, 'dark'], ['haul', 782, 164, 17, 'green'], ['camera', 816, 163, 15, 'dark'], ['haul', 869, 164, 17, 'green'], ['camera', 918, 163, 15, 'dark'],
      ['exit', 489, 183, 13, 'navy'], ['bt', 484, 186, 16, 'blue'], ['exit', 632, 183, 14, 'maroon'], ['key', 633, 183, 14, 'red'], ['key', 658, 183, 14, 'green'], ['key', 672, 183, 14, 'red'], ['key', 704, 183, 14, 'green'], ['key', 788, 183, 14, 'red'], ['key', 792, 183, 14, 'green'], ['bt', 944, 189, 15, 'orange'], ['truck', 473, 201, 15, 'yellow'], ['truck', 480, 201, 15, 'yellow'], ['truck', 487, 201, 15, 'yellow']]
  }
];

const pc = x => (x / W * 100).toFixed(3) + '%';
const col = c => C[c] || c;
const vline = (x, y1, y2, stroke, w, extra = '') =>
  `<line x1="${pc(x)}" x2="${pc(x)}" y1="${y1 + TOP}" y2="${y2 + TOP}" stroke="${stroke}" stroke-width="${w}" ${extra}/>`;

function gridLines() {
  let s = '';
  for (let q = 0; q <= 96; q++) {
    const x = q * W / 96;
    if (q % 4 === 0) { s += vline(x, 0, H, '#c6c6c6', 1); continue; }
    const len = q % 2 === 0 ? 23 : 14;
    s += vline(x, 0, len, '#bebebe', 1) + vline(x, 44, 44 + len, '#bebebe', 1);
    s += vline(x, 131 - len, 131, '#bebebe', 1) + vline(x, H - len, H, '#bebebe', 1);
  }
  ROW_Y.forEach((y, i) => {
    s += `<line x1="0" x2="100%" y1="${y + TOP}" y2="${y + TOP}" stroke="${i % 2 ? '#b9b9b9' : '#d6d6d6'}" stroke-width="${i % 2 ? 1 : 2}" shape-rendering="crispEdges"/>`;
  });
  return s;
}

function hours() {
  let s = '';
  for (let h = 0; h <= 24; h++) {
    const t = h % 24 === 0 ? 'M' : h === 12 ? 'N' : h % 12;
    s += `<text class="hour" x="${pc(h * W / 24)}" y="14">${t}</text>`;
  }
  return s;
}

function icon([name, x, y, size, c]) {
  return `<svg x="${pc(x)}" y="${y + TOP}" overflow="visible" color="${col(c)}"><use href="#i-${name}" x="${-size / 2}" y="${-size / 2}" width="${size}" height="${size}"/></svg>`;
}

function chart(d) {
  const bands = d.bands.map(([a, b, c]) => `<rect x="${pc(a)}" width="${pc(b - a)}" y="${TOP}" height="200" fill="${c}"/>`).join('');
  const lines = d.lines.map(([k, a, b, o]) => `<rect x="${pc(a)}" width="${pc(b - a)}" y="${LINE_Y[k] + TOP - 4}" height="7" fill="${C[k]}" opacity="${o || 1}"/>`).join('');
  const steps = d.steps.map(([x, a, b, k]) => vline(x, a, b, C[k], 2)).join('');
  const ticks = d.ticks.map(x => vline(x, 102, 115, C.d, 3)).join('');
  const rods = d.rods.map(([x, c, w, dash, end]) => vline(x, 0, end || H, col(c), w, dash ? `stroke-dasharray="${dash} ${dash}"` : '')).join('');
  const texts = d.texts.map(([k, x, t, pale]) => `<text class="dur" x="${pc(x)}" y="${TEXT_Y[k] + TOP}" ${pale ? 'opacity=".7"' : ''}>${t}</text>`).join('');
  const marks = d.marks.map(([x, k]) => vline(x, LINE_Y[k] - 11, LINE_Y[k] + 3, C.mark, 3) + vline(x, LINE_Y[k] + 5, LINE_Y[k] + 8, C.mark, 3)).join('');
  const ir = d.ir ? `<text class="ir-t" x="${pc(d.ir)}" y="${197 + TOP}">IR</text>` : '';
  return `<svg class="chart" role="img" aria-label="${d.title}">
    <defs><linearGradient id="shade"><stop offset="0" stop-color="#cacbca" stop-opacity="0"/><stop offset=".3" stop-color="#cacbca" stop-opacity=".9"/><stop offset=".75" stop-color="#cacbca" stop-opacity=".9"/><stop offset="1" stop-color="#cacbca" stop-opacity=".2"/></linearGradient></defs>
    ${hours()}${bands}${gridLines()}<g opacity="${d.dim ? .68 : 1}">${lines}${steps}${ticks}${texts}${marks}${d.icons.map(icon).join('')}${rods}${ir}</g></svg>`;
}

const ic = n => `<svg class="ic"><use href="#i-${n}"/></svg>`;

document.getElementById('days').innerHTML = days.map(d => `
  <article class="day">
    <div class="day-head">
      <div class="day-tools">
        <div class="btn-group"><button class="btn sm teal faded caret">Co-drivers</button><button class="btn sm outline" aria-label="Truck">${ic('truck')}</button></div>
        <button class="btn sm amber caret">Trucks</button>
        <div class="btn-group"><button class="btn sm ${d.badge ? 'green' : 'outline-green faded'} timer" aria-label="Engine">${ic('timer')}${d.badge ? `<span class="badge one">${d.badge}</span>` : ''}</button><button class="btn sm outline-green" aria-label="Refresh">${ic('sync')}</button></div>
      </div>
      <h2 class="day-title">${d.title}${d.burst ? ic('burst') : ''}</h2>
    </div>
    <div class="day-body">
      <div class="duty"><span class="off-c">OFF</span><span class="sb-c">SB</span><span class="d-c">D</span><span class="on-c">ON</span></div>
      ${chart(d)}
      <div class="totals">
        <span class="off-c">${d.totals[0]}</span><span class="sb-c">${d.totals[1]}</span><span class="d-c">${d.totals[2]}</span><span class="on-c">${d.totals[3]}</span>
        <div class="day-foot"><button class="btn sm outline note" aria-label="Comment">${ic('comment')}</button><button class="btn sm teal log-events">Log Events ${ic('chevron')}</button></div>
      </div>
    </div>
  </article>`).join('');
```
